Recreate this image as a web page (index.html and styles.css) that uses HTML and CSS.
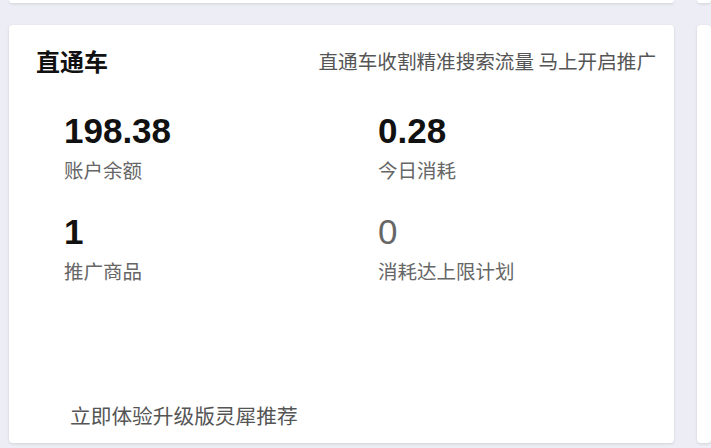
FILE: index.html
```html
<!DOCTYPE html>
<html lang="zh-CN">
<head>
  <meta charset="UTF-8" />
  <meta name="viewport" content="width=device-width, initial-scale=1.0" />
  <title>直通车</title>
  <link rel="stylesheet" href="styles.css">
</head>
<body>

  <div class="board">
    <div class="card-row top-row">
      <div class="card stub"></div>
      <div class="card stub"></div>
    </div>

    <div class="card-row">
      <section class="card promo-card">
        <div class="card-head">
          <h2 class="card-title">直通车</h2>
          <span class="card-tip">直通车收割精准搜索流量 马上开启推广</span>
        </div>

        <div class="stats">
          <div class="stat">
            <div class="stat-num">198.38</div>
            <div class="stat-label">账户余额</div>
          </div>
          <div class="stat">
            <div class="stat-num">0.28</div>
            <div class="stat-label">今日消耗</div>
          </div>
          <div class="stat">
            <div class="stat-num">1</div>
            <div class="stat-label">推广商品</div>
          </div>
          <div class="stat">
            <div class="stat-num muted">0</div>
            <div class="stat-label">消耗达上限计划</div>
          </div>
        </div>

        <a class="card-link" href="#">立即体验升级版灵犀推荐</a>
      </section>

      <section class="card"></section>
    </div>
  </div>

</body>
</html>
```

FILE: styles.css
```css
html, body {
  height: 100%;
}
body {
  margin: 0;
  background-color: #ededf5;
  font-family: "Noto Sans CJK SC", "Liberation Sans", sans-serif;
  color: #333;
  overflow: hidden;
}

.board {
  padding-left: 9px;
  overflow: hidden;
}
.card-row {
  display: grid;
  grid-template-columns: 665px 1fr;
  column-gap: 23px;
  margin-top: 22px;
  padding-bottom: 5px;
}
.card-row.top-row {
  margin-top: 0;
  padding-bottom: 0;
}

.card {
  background-color: #fff;
  border-radius: 4px;
  box-shadow: 0 1px 3px rgba(0, 0, 0, 0.12);
  height: 418px;
}
.card.stub {
  height: 3px;
  border-radius: 0 0 4px 4px;
}

.promo-card {
  display: flex;
  flex-direction: column;
  box-sizing: border-box;
  padding: 19px 18px 15px 27px;
}

.card-head {
  display: flex;
  justify-content: space-between;
  align-items: center;
  height: 32px;
}
.card-title {
  margin: 0;
  font-size: 24px;
  font-weight: bold;
  color: #111;
}
.card-tip {
  font-size: 19.6px;
  color: #555;
}

.stats {
  display: grid;
  grid-template-columns: 314px 1fr;
  row-gap: 29px;
  margin-top: 35px;
  padding-left: 28px;
}
.stat-num {
  font-family: "Liberation Sans", Arial, sans-serif;
  font-size: 35px;
  line-height: 40px;
  font-weight: bold;
  color: #111;
}
.stat-num.muted {
  font-weight: normal;
  color: #666;
}
.stat-label {
  margin-top: 6px;
  font-size: 19.5px;
  line-height: 26px;
  color: #666;
}

.card-link {
  margin-top: auto;
  margin-left: 34px;
  font-size: 20.7px;
  line-height: 26px;
  color: #555;
  text-decoration: none;
}
```
